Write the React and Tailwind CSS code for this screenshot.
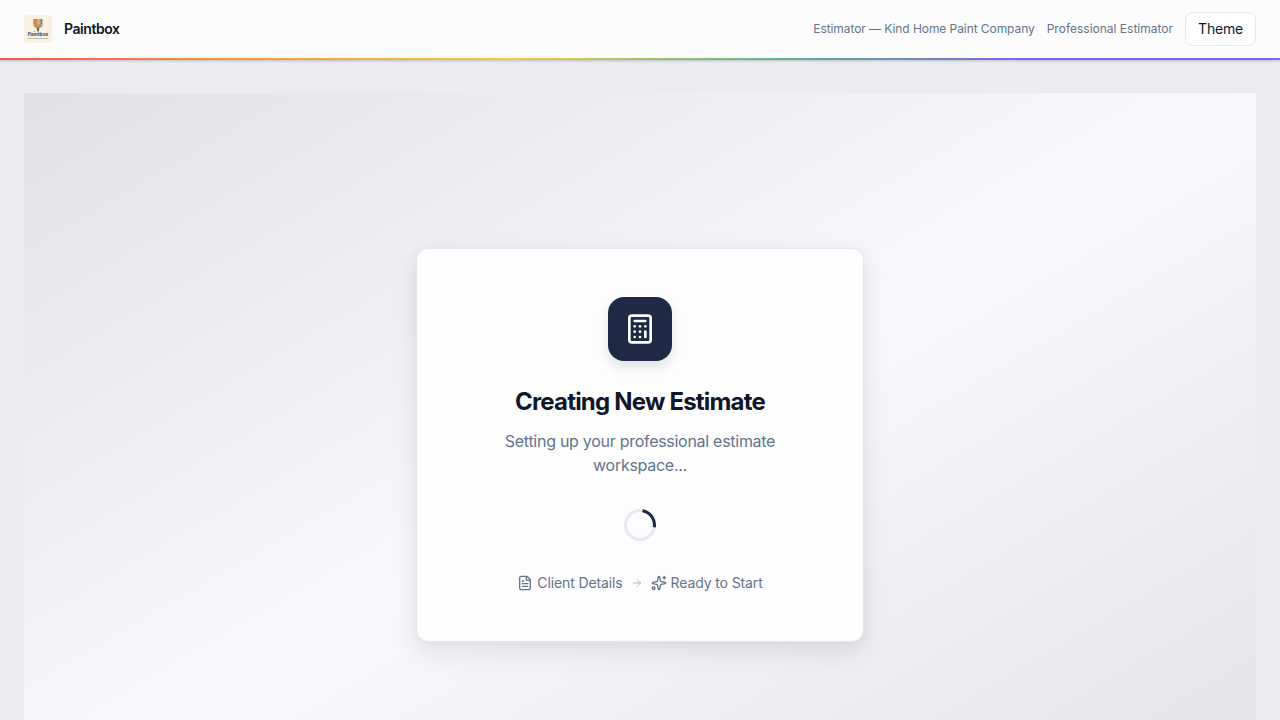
import { ArrowRight, Calculator, FileText, Sparkles } from "lucide-react";

function Logo() {
  return (
    <svg width="28" height="28" viewBox="0 0 28 28" className="rounded-[4px]" aria-label="Paintbox">
      <rect width="28" height="28" fill="#f9f0e2" />
      <rect x="9.5" y="4" width="2.4" height="5.5" fill="#ec6547" />
      <rect x="11.9" y="4" width="2" height="5.5" fill="#f28a2e" />
      <rect x="13.9" y="4" width="1.5" height="5.5" fill="#edc23d" />
      <rect x="15.4" y="4" width="1.3" height="5.5" fill="#64ab68" />
      <rect x="16.7" y="4" width="1.7" height="5.5" fill="#5d79b8" />
      <path d="M9.6 9.3h8.8v2l-2.6 1.8h-3.6l-2.6-1.8z" fill="#b59468" />
      <path d="M12.7 12.8h2.6l-.6 3.6h-1.4z" fill="#6d5b45" />
      <text x="14" y="21.4" textAnchor="middle" fontFamily="Inter, sans-serif" fontSize="4.8" fontWeight="700" fill="#34495b">Paintbox</text>
      <rect x="4" y="23" width="20" height="0.8" fill="#8c9496" opacity=".75" />
    </svg>
  );
}

function Header() {
  return (
    <header className="relative z-10 shrink-0 shadow-[0_1px_3px_rgba(15,23,42,0.12),0_1px_2px_rgba(15,23,42,0.1)]">
      <div className="flex h-[58px] items-center justify-between bg-[#fcfcfc] px-6">
        <div className="flex items-center gap-3">
          <Logo />
          <span className="text-sm font-semibold tracking-[-0.44px] text-[#0f172a]">Paintbox</span>
        </div>
        <div className="flex items-center gap-3">
          <span className="text-xs tracking-[-0.07px] text-[#64748b]">Estimator — Kind Home Paint Company</span>
          <span className="text-xs text-[#64748b]">Professional Estimator</span>
          <button className="h-[34px] w-[71px] rounded-lg border border-[#e6e9f1] bg-white text-sm tracking-[-0.2px] text-[#0f172a]">Theme</button>
        </div>
      </div>
      <div className="h-0.5 bg-[linear-gradient(90deg,#e85d4f_0%,#f59a3c_20%,#f2c94c_40%,#5fb88a_60%,#7c65e6_80%,#7c65e6_100%)]" />
    </header>
  );
}

function EstimateCard() {
  return (
    <section className="flex h-[394px] w-[448px] flex-col items-center rounded-xl border border-[#e5e7f0] bg-[#fdfdfe] px-12 pt-12 shadow-[0_10px_28px_rgba(15,23,42,0.09),0_2px_8px_rgba(15,23,42,0.04)]">
      <div className="flex size-16 items-center justify-center rounded-2xl bg-[#1e2a45] text-white shadow-[0_6px_12px_rgba(15,23,42,0.12)]">
        <Calculator size={32} />
      </div>
      <h1 className="mt-[25px] text-2xl font-bold tracking-[-0.8px] text-[#0f172a]">Creating New Estimate</h1>
      <p className="mt-[11px] text-center text-base tracking-[-0.28px] text-[#64748b]">
        Setting up your professional estimate
        <br />
        workspace...
      </p>
      <div className="mt-8 shrink-0">
        <svg width="32" height="32" viewBox="0 0 32 32" fill="none" strokeWidth="3">
          <circle cx="16" cy="16" r="14.5" stroke="#e6e8f1" />
          <path d="M18.5 1.72A14.5 14.5 0 0 1 30.3 18.3" stroke="#1e2a45" />
        </svg>
      </div>
      <div className="mt-8 flex items-center gap-2 text-sm tracking-[-0.12px] text-[#64748b]">
        <span className="flex items-center gap-1">
          <FileText size={16} />
          Client Details
        </span>
        <ArrowRight size={12} className="opacity-50" />
        <span className="flex items-center gap-1">
          <Sparkles size={16} />
          Ready to Start
        </span>
      </div>
    </section>
  );
}

export default function App() {
  return (
    <div className="flex h-screen flex-col overflow-hidden bg-[#ebecf1] font-[Inter,'Liberation_Sans',sans-serif] antialiased">
      <Header />
      <main className="px-6 pt-[33px]">
        <div className="flex h-[720px] justify-center bg-linear-to-br from-[#e1e2e6] via-[#f8f9fd] to-[#e1e2e6] pt-[155px]">
          <EstimateCard />
        </div>
      </main>
    </div>
  );
}
